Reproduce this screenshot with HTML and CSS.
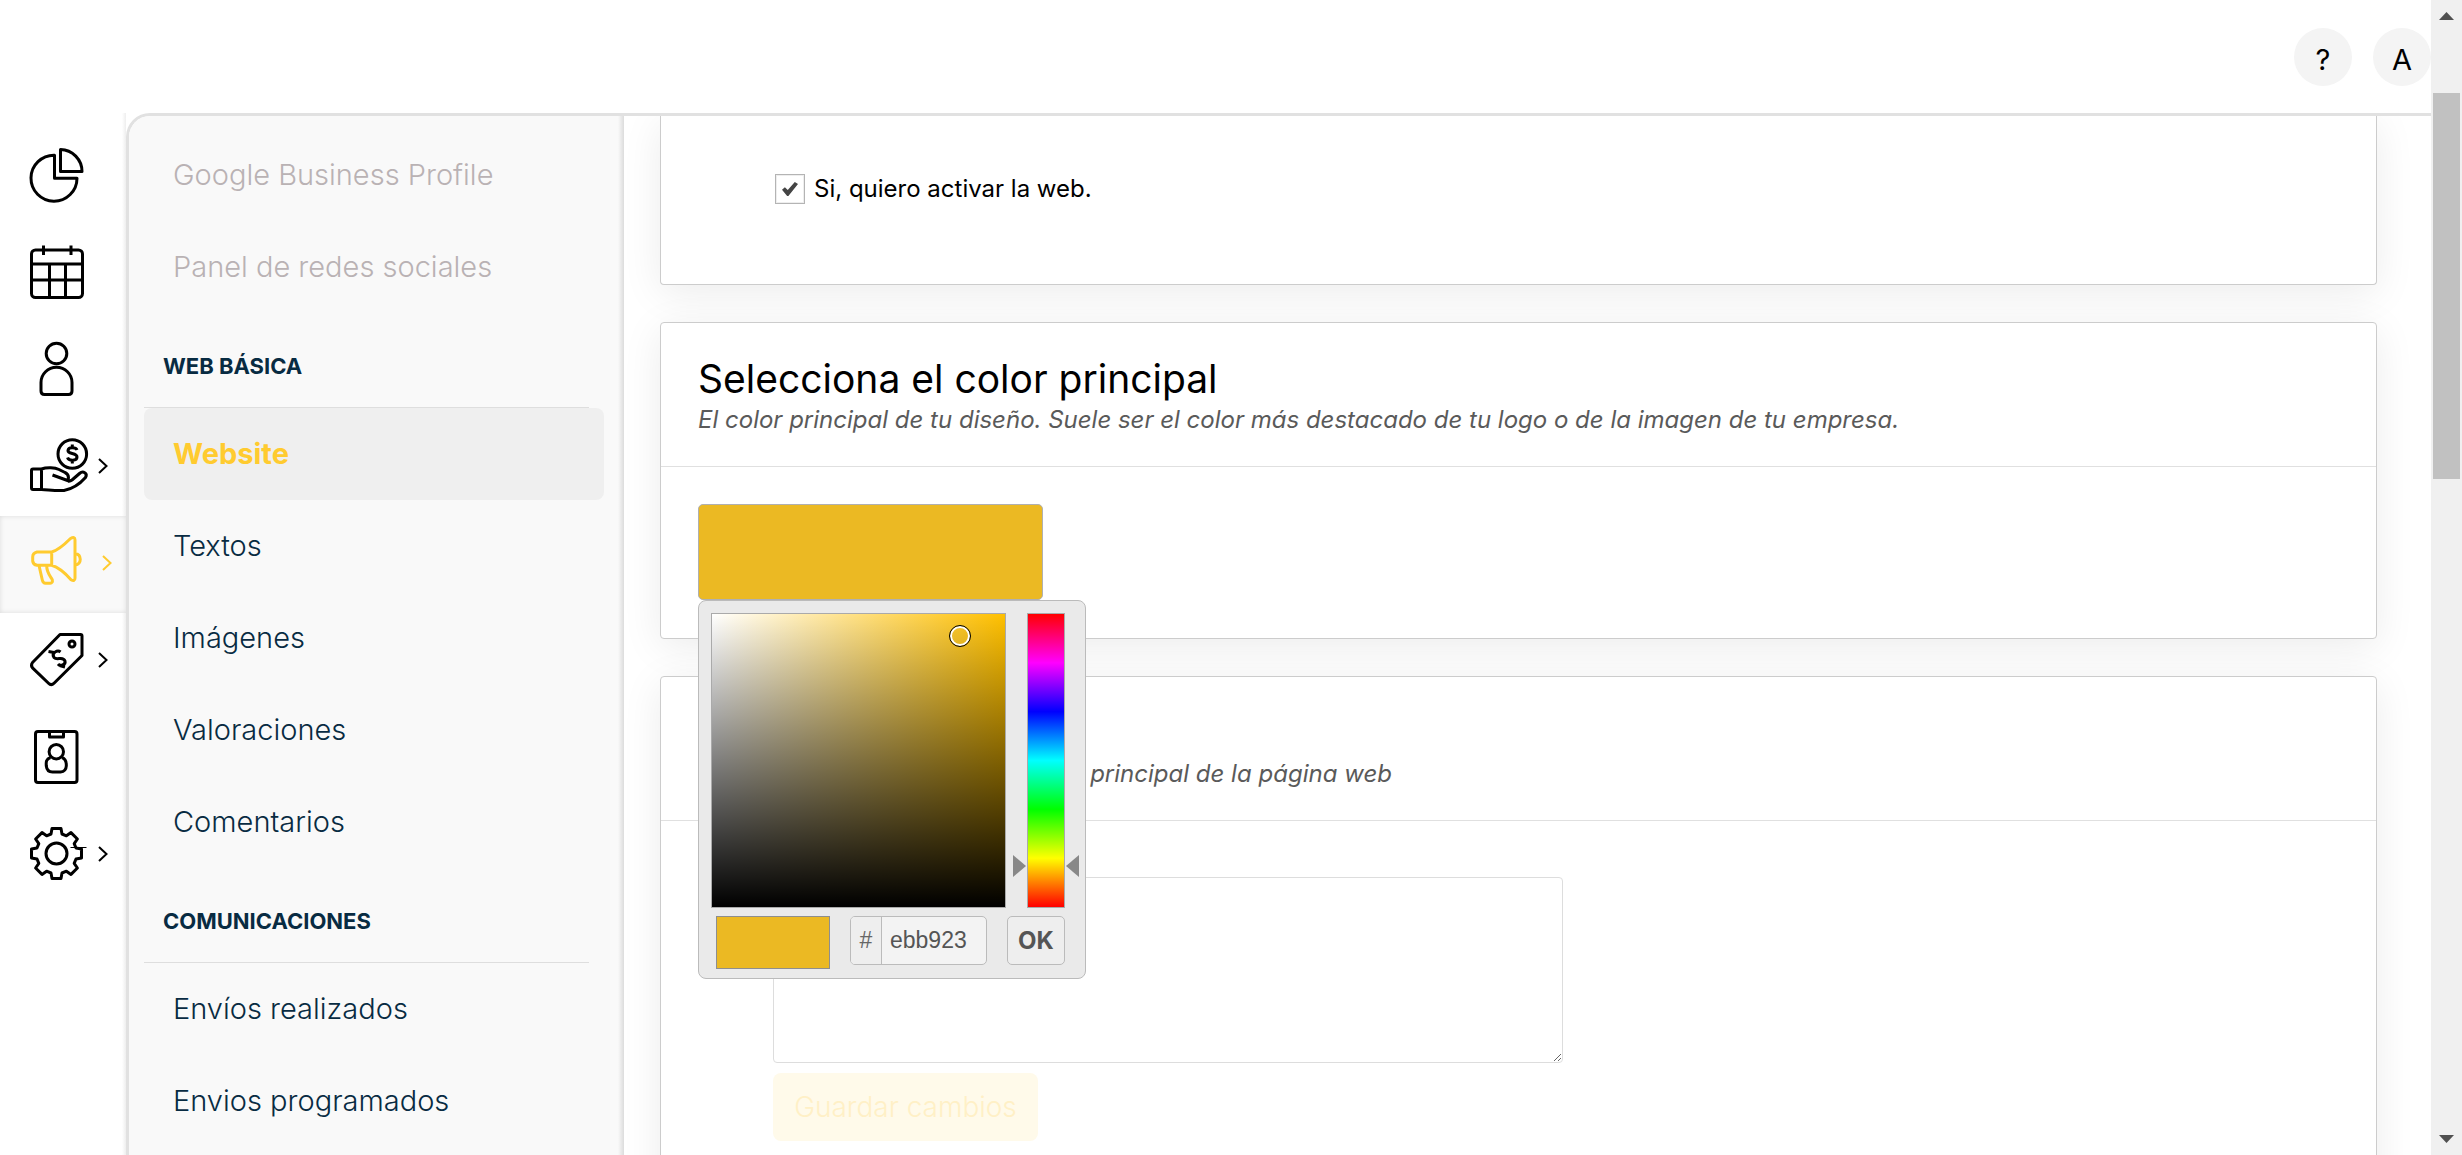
FILE: index.html
```
<!DOCTYPE html>
<html lang="es">
<head>
<meta charset="utf-8">
<title>Website</title>
<link rel="stylesheet" href="styles.css">
</head>
<body>
<div class="app">
  <header class="topbar">
    <button class="round" type="button" aria-label="Ayuda">?</button>
    <button class="round" type="button" aria-label="Cuenta">A</button>
  </header>
  <div class="workspace">
    <nav class="rail" aria-label="Principal">
      <a class="rail-item" href="#" aria-label="Informes">
        <svg class="icon" viewBox="0 0 54 54"><path d="M30.5 1.5A22 22 0 0 1 52 23.500H30.500ZM24.500 7.200A23 23 0 1 0 47 30.200H24.500Z"/></svg>
      </a>
      <a class="rail-item" href="#" aria-label="Calendario">
        <svg class="icon" viewBox="0 0 54 54"><rect x="1.500" y="5" width="51" height="47.500" rx="4"/><path d="M1.500 19H52.500M1.500 35H52.500M19.500 19V52M35.500 19V52M13.500 .5V10M41 .5V10"/></svg>
      </a>
      <a class="rail-item" href="#" aria-label="Clientes">
        <svg class="icon" viewBox="0 0 54 54"><circle cx="26.500" cy="11.500" r="10.300"/><path d="M11 49V40.500A15.500 15.200 0 0 1 42 40.500V49Q42 52.500 38.500 52.500H14.500Q11 52.500 11 49Z"/></svg>
      </a>
      <a class="rail-item" href="#" aria-label="Ventas">
        <svg class="icon" viewBox="0 0 54 54"><circle cx="42.300" cy="15" r="14.300"/><path d="M47 11C46 8.500 38.500 7.500 38 11.500C37.700 15.500 47 13.500 47 18C47 22 39 22.500 37.500 18.500M42.300 5.500V8.500M42.300 21V24.500"/><path d="M1.500 31.500Q1.500 30 3 30H11.500V50.500H3Q1.500 50.500 1.500 49ZM11.500 30C17 28 25 28.500 29 30.500L35 33.500Q38.500 35 38.500 39L37.500 41.500L22.500 36M38 42Q40 42.500 42 41L49.500 34.500C53 31.500 58 34 55.500 38.500C48 47 42 50 34 51.500C26 52 20 51 11.500 50.500"/></svg>
        <svg class="chevron" viewBox="0 0 10 16"><path d="M1 1L8.500 8L1 15"/></svg>
      </a>
      <a class="rail-item rail-item--active" href="#" aria-label="Marketing">
        <svg class="icon" viewBox="0 0 54 54"><path d="M21.700 16H7Q2.700 17 2.700 21V25Q3 28.500 7 29.300H21.700ZM21.700 16C29 14 36 7 40.500 2.500Q45 0 45 4V42Q45 46 41 43.700C35 37 29 31.500 21.700 29.300M45 17.500C52 18.500 52 28 45 29.300M9 29.500L12.300 44Q13 47.300 15.500 47.300H20Q23 47 22.300 43.700C20 40 16.500 36 16.700 29.500"/></svg>
        <svg class="chevron" viewBox="0 0 10 16"><path d="M1 1L8.500 8L1 15"/></svg>
      </a>
      <a class="rail-item" href="#" aria-label="Precios">
        <svg class="icon" viewBox="0 0 54 54"><path d="M30 1.500H50.500Q52 1.500 52 3V22.500L24 50.300Q21.200 53 18.500 50.300L2.500 34.800Q.5 32.300 2.500 29.500ZM30.500 19C27.500 16.500 21 20 24 24.500C27 28 33 22.500 35 28C36 32 30 33.500 28 31M18.500 18.500L24 19.500M29.500 32.500L35 34"/><circle cx="42" cy="11" r="3"/></svg>
        <svg class="chevron" viewBox="0 0 10 16"><path d="M1 1L8.500 8L1 15"/></svg>
      </a>
      <a class="rail-item" href="#" aria-label="Empleados">
        <svg class="icon" viewBox="0 0 54 54"><rect x="5.500" y="1.500" width="41.500" height="51" rx="2.500"/><path d="M19.500 2V7H33.500V2"/><circle cx="26.300" cy="21.700" r="7.200"/><path d="M20.500 27.500C16 29 16 32 16.300 36Q17 42 22.500 42H30.500Q36 41.500 36.300 36C36.500 32 36 29 32 27.500"/></svg>
      </a>
      <a class="rail-item" href="#" aria-label="Ajustes">
        <svg class="icon" viewBox="0 0 54 54"><g transform="translate(26.500 26.500)"><path d="M-5.500 -19.500L-4.500 -25H4.500L5.500 -19.500L9.900 -17.700L14.500 -20.900L20.900 -14.500L17.700 -9.900L19.500 -5.500L25 -4.500V4.500L19.500 5.500L17.700 9.900L20.900 14.500L14.500 20.900L9.900 17.700L5.500 19.500L4.500 25H-4.500L-5.500 19.500L-9.900 17.700L-14.500 20.900L-20.900 14.500L-17.700 9.900L-19.500 5.500L-25 4.500V-4.500L-19.500 -5.500L-17.700 -9.900L-20.900 -14.500L-14.500 -20.900L-9.900 -17.700Z"/><circle r="10.500"/><path class="hairline" d="M14 -6H30"/></g></svg>
        <svg class="chevron" viewBox="0 0 10 16"><path d="M1 1L8.500 8L1 15"/></svg>
      </a>
    </nav>
    <div class="panel">
      <nav class="sidebar" aria-label="Marketing">
        <a class="side-link side-link--disabled" href="#">Google Business Profile</a>
        <a class="side-link side-link--disabled" href="#">Panel de redes sociales</a>
        <h2 class="side-heading">WEB BÁSICA</h2>
        <a class="side-link side-link--active" href="#">Website</a>
        <a class="side-link" href="#">Textos</a>
        <a class="side-link" href="#">Imágenes</a>
        <a class="side-link" href="#">Valoraciones</a>
        <a class="side-link" href="#">Comentarios</a>
        <h2 class="side-heading">COMUNICACIONES</h2>
        <a class="side-link" href="#">Envíos realizados</a>
        <a class="side-link" href="#">Envios programados</a>
      </nav>
      <main class="content">
        <section class="card card--first">
          <label class="check"><input class="check-box" type="checkbox" checked>Si, quiero activar la web.</label>
        </section>
        <section class="card">
          <div class="card-head">
            <h1 class="card-title">Selecciona el color principal</h1>
            <p class="card-text">El color principal de tu diseño. Suele ser el color más destacado de tu logo o de la imagen de tu empresa.</p>
          </div>
          <div class="card-body">
            <div class="color-field">
              <button class="swatch" type="button" aria-label="Color principal"></button>
              <div class="picker">
                <div class="picker-row">
                  <div class="shade"><span class="ring"></span></div>
                  <div class="hue"><span class="arrow arrow--left"></span><span class="arrow arrow--right"></span></div>
                </div>
                <div class="picker-row picker-row--tools">
                  <span class="preview"></span>
                  <label class="hex"><span class="hex-sign">#</span><input class="hex-input" type="text" value="ebb923"></label>
                  <button class="ok" type="button">OK</button>
                </div>
              </div>
            </div>
          </div>
        </section>
        <section class="card">
          <div class="card-head">
            <h1 class="card-title">Texto principal</h1>
            <p class="card-text">Un texto se muestra en la sección principal de la página web</p>
          </div>
          <form class="card-body card-body--form">
            <textarea class="message" aria-label="Texto principal"></textarea>
            <button class="save" type="button" disabled>Guardar cambios</button>
          </form>
        </section>
      </main>
    </div>
  </div>
</div>
<div class="scrollbar" aria-hidden="true">
  <svg class="scroll-arrow" viewBox="0 0 15 8"><path d="M0 8L7.500 0L15 8Z"/></svg>
  <div class="scroll-track"><div class="scroll-thumb"></div></div>
  <svg class="scroll-arrow" viewBox="0 0 15 8"><path d="M0 0L7.500 8L15 0Z"/></svg>
</div>
</body>
</html>
```
FILE: styles.css
```
* { box-sizing: border-box; }

body {
  margin: 0;
  height: 100vh;
  overflow: hidden;
  display: flex;
  background: #fff;
  color: #000;
  font-family: Inter, "Open Sans", sans-serif;
}

button, input, textarea { font-family: inherit; margin: 0; }
a { text-decoration: none; color: inherit; }
h1, h2, p { margin: 0; font-weight: 400; }

.app { flex: 1; min-width: 0; display: flex; flex-direction: column; }

.topbar {
  flex: none;
  height: 113px;
  display: flex;
  align-items: center;
  justify-content: flex-end;
  gap: 21px;
}
.round {
  width: 58px;
  height: 58px;
  padding: 5px 0 0;
  border: 0;
  border-radius: 50%;
  background: #f4f4f4;
  color: #000;
  font-size: 29px;
  font-weight: 400;
}

.workspace { flex: 1; min-height: 0; display: flex; }

/* Icon rail */
.rail {
  flex: none;
  width: 126px;
  padding-top: 15px;
  background: linear-gradient(to left, #eee, #fff 4px);
}
.rail-item {
  height: 97px;
  padding: 0 0 4px 30px;
  display: flex;
  align-items: center;
  gap: 14px;
}
.rail-item--active {
  gap: 18px;
  background: #f9f9f9;
  color: #ffcb2f;
  box-shadow: inset 0 0 5px rgba(0, 0, 0, .12);
}
.icon, .chevron {
  flex: none;
  overflow: visible;
  fill: none;
  stroke: currentColor;
  stroke-width: 3;
  stroke-linejoin: round;
}
.icon { width: 54px; height: 54px; }
.chevron { width: 10px; height: 16px; stroke-width: 2; stroke-linejoin: miter; }
.hairline { stroke-width: 1; }

.panel {
  flex: 1;
  min-width: 0;
  display: flex;
  overflow: hidden;
  border-top: 3px solid #e1e1e1;
  border-left: 3px solid #e1e1e1;
  border-top-left-radius: 24px;
}

/* Section menu */
.sidebar {
  flex: none;
  width: 495px;
  padding: 13px 20px 0 15px;
  background: linear-gradient(to left, #dcdcdc, #f9f9f9 6px);
}
.side-link {
  display: block;
  padding-left: 29px;
  border-radius: 8px;
  color: #082b42;
  font-size: 29px;
  font-weight: 300;
  line-height: 92px;
}
.side-link--disabled { color: #b9b2b4; }
.side-link--active { background: #efefef; color: #ffcb2f; font-weight: 700; }
.side-heading {
  margin-right: 15px;
  padding: 33px 0 21px 19px;
  border-bottom: 1px solid #dedede;
  color: #082b42;
  font-size: 22px;
  font-weight: 700;
  line-height: 40px;
}

/* Cards */
.content {
  flex: 1;
  min-width: 0;
  padding: 0 54px 0 36px;
  display: flex;
  flex-direction: column;
  gap: 37px;
  background: #fff;
}
.card {
  flex: none;
  border: 1px solid #ccc;
  border-radius: 4px;
  background: #fff;
  box-shadow: 0 8px 40px rgba(0, 0, 0, .08);
}
.card--first {
  padding: 58px 0 80px 114px;
  border-top: 0;
  border-top-left-radius: 0;
  border-top-right-radius: 0;
}
.card-head { padding: 34px 37px 28px; border-bottom: 1px solid #e0e0e0; }
.card-title { font-size: 39px; font-weight: 400; line-height: 44px; }
.card-text {
  color: #5a5a5a;
  font-size: 24px;
  font-style: italic;
  font-weight: 400;
  line-height: 37px;
}
.card-body { padding: 37px 37px 38px; }
.card-body--form { padding: 56px 112px; }

.check {
  display: flex;
  align-items: center;
  gap: 9px;
  font-size: 24px;
  line-height: 32px;
}
.check-box {
  appearance: none;
  width: 30px;
  height: 30px;
  border: 1px solid #b4b4b4;
  box-shadow: inset 0 0 0 1px #eee;
  background: #fff;
  display: grid;
  place-items: center;
}
.check-box::before {
  content: "";
  width: 16px;
  height: 14px;
  background: #444;
  clip-path: polygon(0 55%, 18% 38%, 36% 58%, 80% 0, 100% 14%, 40% 100%, 32% 100%);
}
.card--first .check { height: 30px; }

/* Colour picker */
.color-field { position: relative; }
.swatch {
  display: block;
  width: 345px;
  height: 96px;
  border: 1px solid #b0b0b0;
  border-radius: 5px;
  background: #ebb923;
}
.picker {
  position: absolute;
  z-index: 10;
  top: 100%;
  left: 0;
  width: 388px;
  padding: 12px 12px 9px;
  border: 1px solid #bbb;
  border-radius: 8px;
  background: #eaeaea;
}
.picker-row { display: flex; gap: 21px; }
.picker-row--tools { gap: 20px; padding: 8px 8px 0 5px; align-items: flex-start; }
.shade, .hue { position: relative; height: 295px; border: 1px solid #aaa; }
.shade {
  width: 295px;
  background: linear-gradient(to top, #000, transparent), linear-gradient(to right, #fff, #ffc000);
}
.ring {
  position: absolute;
  top: 11px;
  left: 237px;
  width: 22px;
  height: 22px;
  border: 1px solid #000;
  border-radius: 50%;
  box-shadow: inset 0 0 0 2px #fff;
}
.hue {
  width: 38px;
  background: linear-gradient(#f00, #f0f, #00f, #0ff, #0f0, #ff0, #f00);
}
.arrow {
  position: absolute;
  top: 241px;
  width: 13px;
  height: 22px;
  background: #888;
}
.arrow--left { left: -15px; clip-path: polygon(0 0, 100% 50%, 0 100%); }
.arrow--right { right: -15px; clip-path: polygon(100% 0, 0 50%, 100% 100%); }
.preview { width: 114px; height: 53px; border: 1px solid #8e8e8e; background: #ebb923; }
.hex {
  width: 137px;
  height: 49px;
  display: flex;
  overflow: hidden;
  border: 1px solid #bbb;
  border-radius: 5px;
  background: #f3f3f3;
  font: 23px/47px "Liberation Sans", Arial, sans-serif;
}
.hex-sign {
  width: 31px;
  border-right: 1px solid #bbb;
  background: #eee;
  color: #666;
  text-align: center;
}
.hex-input {
  flex: 1;
  min-width: 0;
  padding: 0 0 0 8px;
  border: 0;
  background: none;
  color: #555;
  font-size: 23px;
}
.ok {
  flex: 1;
  height: 49px;
  padding: 0;
  border: 1px solid #bbb;
  border-radius: 5px;
  background: #eee;
  color: #555;
  font-size: 24px;
  font-weight: 700;
}

/* Message form */
.message {
  display: block;
  width: 790px;
  max-width: 100%;
  height: 186px;
  margin-bottom: 10px;
  border: 1px solid #ddd;
  border-radius: 4px;
  background: #fff;
  font-size: 24px;
}
.save {
  width: 265px;
  height: 68px;
  padding: 0;
  border: 0;
  border-radius: 8px;
  background: #fffaea;
  color: #fff0c6;
  font-size: 28px;
  font-weight: 300;
}

/* Page scrollbar */
.scrollbar {
  flex: none;
  width: 31px;
  padding: 12px 2px;
  display: flex;
  flex-direction: column;
  align-items: center;
  background: #f0f0f0;
}
.scroll-arrow { flex: none; width: 15px; height: 8px; fill: #505050; }
.scroll-track { flex: 1; align-self: stretch; padding: 73px 0 0; }
.scroll-thumb { height: 37%; background: #c1c1c1; }
```
